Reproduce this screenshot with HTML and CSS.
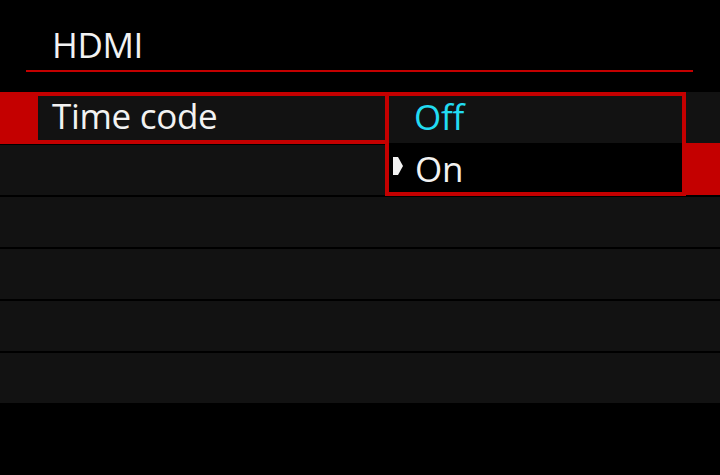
FILE: index.html
```html
<!DOCTYPE html>
<html lang="en">
<head>
    <meta charset="UTF-8">
    <title>HDMI</title>
    <link rel="stylesheet" href="styles.css">
</head>
<body>
    <div class="screen">
        <div class="header">
            <h1>HDMI</h1>
        </div>
        <div class="title-rule"></div>

        <div class="menu">
            <div class="row selected">
                <div class="row-frame">
                    <div class="row-label">Time code</div>
                </div>
            </div>
            <div class="row"></div>
            <div class="row"></div>
            <div class="row"></div>
            <div class="row"></div>
            <div class="row"></div>

            <div class="popup">
                <div class="option option-current">Off</div>
                <div class="option option-focus">
                    <svg class="marker" width="10" height="18" viewBox="0 0 10 18">
                        <polygon points="0,0 5,0 10,9 5,18 0,18" fill="#f2f2f2"/>
                    </svg>
                    <span>On</span>
                </div>
            </div>
        </div>
    </div>
</body>
</html>
```

FILE: styles.css
```css
body {
    margin: 0;
    padding: 0;
    background: #000000;
    font-family: "Open Sans", "Noto Sans", sans-serif;
    color: #f2f2f2;
}

.screen {
    width: 720px;
    height: 475px;
    overflow: hidden;
}

.header {
    height: 70px;
    padding: 27px 0 0 52px;
    box-sizing: border-box;
}

.header h1 {
    margin: 0;
    font-size: 35px;
    font-weight: 400;
    letter-spacing: -0.4px;
    line-height: 36px;
}

.title-rule {
    width: 667px;
    height: 2px;
    margin-left: 26px;
    background: #c40000;
}

.menu {
    position: relative;
    display: flex;
    flex-direction: column;
    gap: 2px;
    margin-top: 21px;
}

.row {
    height: 50px;
    background: #121212;
}

.row.selected {
    height: 52px;
    margin: -1px 0;
}

.row-frame {
    width: 390px;
    height: 52px;
    padding: 4px 0 4px 38px;
    box-sizing: border-box;
    background: #c40000;
}

.row-label {
    height: 44px;
    padding-left: 14px;
    font-size: 35px;
    letter-spacing: -0.3px;
    line-height: 40px;
    background: #121212;
}

/* option list that drops over the menu */
.popup {
    position: absolute;
    left: 385px;
    top: -1px;
    width: 301px;
    height: 104px;
    box-sizing: border-box;
    border: 4px solid #c40000;
    background: #000000;
}

.popup::after {
    content: "";
    position: absolute;
    right: -38px;
    top: 47px;
    width: 38px;
    height: 52px;
    background: #c40000;
}

.option {
    display: flex;
    align-items: flex-start;
    font-size: 35px;
    letter-spacing: -0.3px;
    line-height: 42px;
    box-sizing: border-box;
}

.option-current {
    height: 47px;
    padding-left: 25px;
    background: #121212;
    color: #22dcf2;
}

.option-focus {
    height: 49px;
    padding: 5px 0 0 4px;
    background: #000000;
}

.marker {
    flex: none;
    margin: 9px 12px 0 0;
}
```
